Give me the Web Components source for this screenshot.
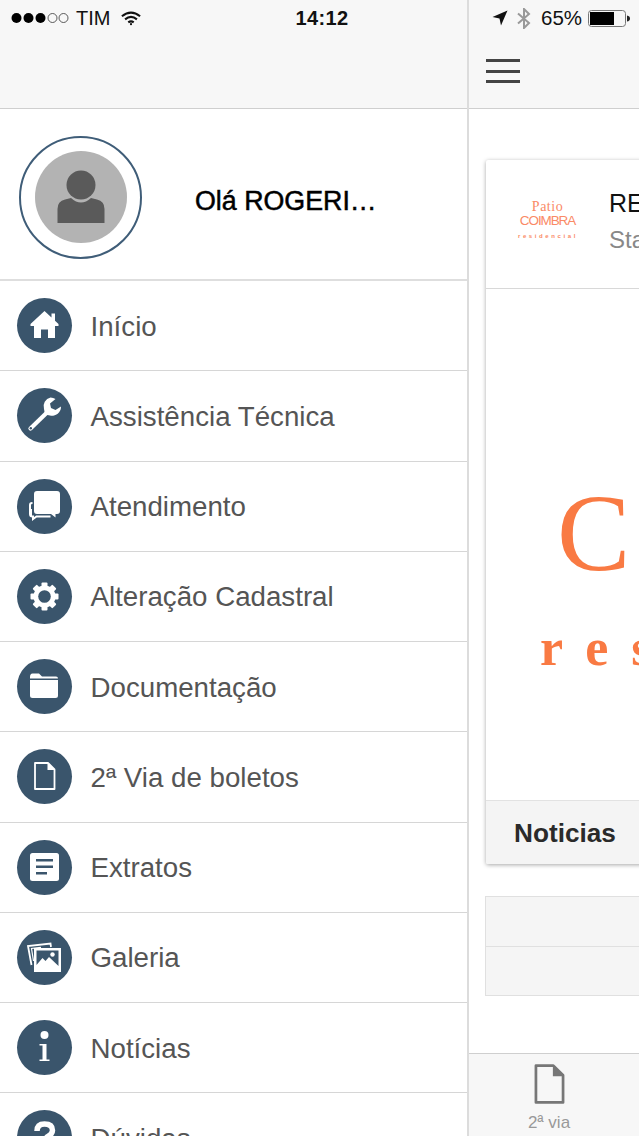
<!DOCTYPE html>
<html lang="pt">
<head>
<meta charset="utf-8">
<title>Menu</title>
<style>
    html, body { margin: 0; padding: 0; background: #fff; }
    body { font-family: "Liberation Sans", Arial, sans-serif; }
    svg { display: block; }
</style>
</head>
<body>
<app-shell>
    <side-menu slot="menu">
        <nav-item label="Início">
            <svg slot="icon" viewBox="0 0 55 55" width="55" height="55"><path fill="#fff" d="M27.5 13 L34.5 19.5 V15.500 H38 V22.800 L41.500 26 V28 H38 V40 H31 V31.500 H24 V40 H17 V28 H13.500 V26 Z"/></svg>
        </nav-item>
        <nav-item label="Assistência Técnica">
            <svg slot="icon" viewBox="0 0 55 55" width="55" height="55"><path fill="none" stroke="#fff" stroke-width="4.200" stroke-linecap="round" d="M13.500 40.500 L30 24.500"/><path fill="#fff" d="M33.500 9.500 A9 9 0 0 0 27 21 L28 26.500 L33 27.500 A9 9 0 0 0 44 18.500 L38.500 22 L34 20 L33 15.500 L38.500 11 A9 9 0 0 0 33.500 9.500 Z"/><circle cx="13.800" cy="40.300" r="1.200" fill="#3a556c"/></svg>
        </nav-item>
        <nav-item label="Atendimento">
            <svg slot="icon" viewBox="0 0 55 55" width="55" height="55"><path fill="#fff" d="M20 12 H40 Q43 12 43 15 V32 Q43 35 40 35 H38.500 V38.500 L34 35 H20 Q17 35 17 32 V15 Q17 12 20 12 Z"/><path fill="none" stroke="#fff" stroke-width="2" d="M15.500 24 H15 Q13 24 13 26 V35 Q13 37.500 15.500 37.500 H16 V40 L19.500 37.500 H33.500"/><path fill="#fff" d="M13 30 H15 V37 H13 Z"/></svg>
        </nav-item>
        <nav-item label="Alteração Cadastral">
            <svg slot="icon" viewBox="0 0 55 55" width="55" height="55"><g fill="#fff"><circle cx="27.500" cy="27.500" r="11"/><rect x="24.500" y="13.500" width="6" height="28" rx="1"/><rect x="24.500" y="13.500" width="6" height="28" rx="1" transform="rotate(45 27.500 27.500)"/><rect x="24.500" y="13.500" width="6" height="28" rx="1" transform="rotate(90 27.500 27.500)"/><rect x="24.500" y="13.500" width="6" height="28" rx="1" transform="rotate(135 27.500 27.500)"/></g><circle cx="27.500" cy="27.500" r="6.300" fill="#3a556c"/></svg>
        </nav-item>
        <nav-item label="Documentação">
            <svg slot="icon" viewBox="0 0 55 55" width="55" height="55"><path fill="#fff" d="M13 18 Q13 14.500 15.500 14.500 H22 L25 17.500 H39 Q41 17.500 41 19.500 H13 Z M13 21 H41 V36.500 Q41 39 38.500 39 H15.500 Q13 39 13 36.500 Z"/></svg>
        </nav-item>
        <nav-item label="2ª Via de boletos">
            <svg slot="icon" viewBox="0 0 55 55" width="55" height="55"><path fill="none" stroke="#fff" stroke-width="1.800" stroke-linejoin="round" d="M18 14 H31 L37.500 20.500 V40 H18 Z"/><path fill="#fff" d="M30.500 13.500 L38 21 H30.500 Z"/></svg>
        </nav-item>
        <nav-item label="Extratos">
            <svg slot="icon" viewBox="0 0 55 55" width="55" height="55"><rect x="13" y="13" width="29" height="28" rx="2.500" fill="#fff"/><g fill="#3a556c"><rect x="19" y="19" width="17" height="2.500"/><rect x="19" y="25.500" width="17" height="2.500"/><rect x="19" y="32" width="11" height="2.500"/></g></svg>
        </nav-item>
        <nav-item label="Galeria">
            <svg slot="icon" viewBox="0 0 55 55" width="55" height="55"><path fill="none" stroke="#fff" stroke-width="1.800" d="M14.500 35 L11 16 L33.500 13.500 L34 17"/><path fill="none" stroke="#fff" stroke-width="1.200" d="M16.500 31 L14.500 18.500 L24 17.300"/><path fill="#fff" fill-rule="evenodd" d="M17 18 H44 V42 H17 Z M19.500 20.500 V35 L25.500 28 L28.500 31 L32 27 L41.500 36 V20.500 Z"/><circle cx="35.500" cy="24.500" r="2.200" fill="#fff"/></svg>
        </nav-item>
        <nav-item label="Notícias">
            <svg slot="icon" viewBox="0 0 55 55" width="55" height="55"><g fill="#fff"><circle cx="27.500" cy="15" r="4"/><rect x="25.500" y="24" width="4" height="16.500"/><rect x="22.500" y="24" width="5" height="1.500"/><rect x="22.500" y="39.500" width="10" height="1.500"/></g></svg>
        </nav-item>
        <nav-item label="Dúvidas">
            <svg slot="icon" viewBox="0 0 55 55" width="55" height="55"><path fill="none" stroke="#fff" stroke-width="5.500" d="M20 21 Q20 14 27.500 14 Q35.500 14 35.500 20.500 Q35.500 24 31 26.500 Q27.500 28.500 27.500 34"/><circle cx="27.500" cy="41" r="3.200" fill="#fff"/></svg>
        </nav-item>
    </side-menu>
    <main-panel slot="main"></main-panel>
</app-shell>

<script>
class AppShell extends HTMLElement {
    constructor() {
        super();
        this.attachShadow({ mode: 'open' });
        this.shadowRoot.innerHTML = `
            <style>
                :host {
                    display: flex;
                    width: 639px;
                    height: 1136px;
                    overflow: hidden;
                }
            </style>
            <slot name="menu"></slot>
            <slot name="main"></slot>
        `;
    }
}
customElements.define('app-shell', AppShell);

class NavBar extends HTMLElement {
    constructor() {
        super();
        this.attachShadow({ mode: 'open' });
        this.shadowRoot.innerHTML = `
            <style>
                :host {
                    display: block;
                    box-sizing: border-box;
                    height: 109px;
                    background: #f7f7f7;
                    border-bottom: 1px solid #cfcfcf;
                    flex: none;
                }
            </style>
            <slot></slot>
        `;
    }
}
customElements.define('nav-bar', NavBar);

// Left half of the status bar: carrier, wifi and clock
class StatusLeft extends HTMLElement {
    constructor() {
        super();
        this.attachShadow({ mode: 'open' });
        this.shadowRoot.innerHTML = `
            <style>
                :host {
                    display: flex;
                    align-items: center;
                    height: 36px;
                    padding-left: 11px;
                    color: #111;
                    font: 20px "Liberation Sans", Arial, sans-serif;
                }
                .carrier { margin-left: 7px; }
                .wifi { margin-left: 11px; }
                .time {
                    margin-left: 154px;
                    font-weight: bold;
                    font-size: 20px;
                    letter-spacing: 0.4px;
                }
                svg { display: block; }
            </style>
            <svg width="58" height="12" viewBox="0 0 58 12">
                <circle cx="5.500" cy="6" r="5"/><circle cx="17.500" cy="6" r="5"/><circle cx="29.500" cy="6" r="5"/>
                <circle cx="41.500" cy="6" r="4.500" fill="none" stroke="#333" stroke-width="0.800"/>
                <circle cx="52.500" cy="6" r="4.500" fill="none" stroke="#333" stroke-width="0.800"/>
            </svg>
            <span class="carrier">TIM</span>
            <svg class="wifi" width="20" height="15" viewBox="0 0 22 16" fill="none" stroke="#111" stroke-width="2.300">
                <path d="M1 5.500 Q11 -2.500 21 5.500"/>
                <path d="M4.500 9 Q11 3.500 17.500 9"/>
                <path d="M8 12.300 Q11 10 14 12.300"/>
                <circle cx="11" cy="14.200" r="1.200" fill="#111" stroke="none"/>
            </svg>
            <span class="time">14:12</span>
        `;
    }
}
customElements.define('status-left', StatusLeft);

// Right half of the status bar: location, bluetooth and battery
class StatusRight extends HTMLElement {
    constructor() {
        super();
        this.attachShadow({ mode: 'open' });
        this.shadowRoot.innerHTML = `
            <style>
                :host {
                    display: flex;
                    align-items: center;
                    height: 36px;
                    padding-left: 23px;
                    color: #111;
                    font: 20.500px "Liberation Sans", Arial, sans-serif;
                }
                .bt { margin-left: 9px; }
                .pct { margin-left: 10px; }
                .batt { margin-left: 6px; }
                svg { display: block; }
            </style>
            <svg width="16" height="16" viewBox="0 0 16 16"><path fill="#111" d="M15.500 0.500 L9 15.500 L7.500 8.500 L0.500 7 Z"/></svg>
            <svg class="bt" width="14" height="21" viewBox="0 0 14 21" fill="none" stroke="#999" stroke-width="2"><path d="M1 5.500 L12 15 L7 20 V1 L12 6 L1 15.500"/></svg>
            <span class="pct">65%</span>
            <svg class="batt" width="43" height="17" viewBox="0 0 43 17">
                <rect x="0.500" y="0.500" width="37" height="16" rx="3" fill="none" stroke="#777"/>
                <rect x="2" y="2" width="24" height="13" fill="#000"/>
                <path d="M39 5.500 Q42 6 42 8.500 Q42 11 39 11.500 Z" fill="#222"/>
            </svg>
        `;
    }
}
customElements.define('status-right', StatusRight);

class UserCard extends HTMLElement {
    constructor() {
        super();
        this.attachShadow({ mode: 'open' });
        this.shadowRoot.innerHTML = `
            <style>
                :host {
                    display: flex;
                    align-items: center;
                    box-sizing: border-box;
                    height: 172px;
                    padding: 6px 0 0 19px;
                    border-bottom: 2px solid #dedede;
                    flex: none;
                }
                .ring {
                    box-sizing: border-box;
                    width: 123px;
                    height: 123px;
                    border: 2px solid #3f5d78;
                    border-radius: 50%;
                    display: flex;
                    align-items: center;
                    justify-content: center;
                    flex: none;
                }
                .name {
                    margin: 8px 0 0 53px;
                    color: #000;
                    font: 26.800px "Liberation Sans", Arial, sans-serif;
                    -webkit-text-stroke: 0.5px #000;
                    white-space: nowrap;
                }
                svg { display: block; }
            </style>
            <div class="ring">
                <svg width="92" height="92" viewBox="0 0 92 92">
                    <circle cx="46" cy="46" r="46" fill="#b3b3b3"/>
                    <circle cx="46" cy="34" r="14.500" fill="#5a5a5a"/>
                    <path fill="#5a5a5a" d="M22.500 72 V58 Q22.500 50 30 48.500 L36 47 Q46 56 56 47 L62 48.500 Q69.500 50 69.500 58 V72 Z"/>
                </svg>
            </div>
            <span class="name">Olá ROGERI…</span>
        `;
    }
}
customElements.define('user-card', UserCard);

class NavItem extends HTMLElement {
    constructor() {
        super();
        this.attachShadow({ mode: 'open' });
        this.shadowRoot.innerHTML = `
            <style>
                :host {
                    display: flex;
                    align-items: center;
                    gap: 18.500px;
                    box-sizing: border-box;
                    height: 90.25px;
                    padding-left: 17px;
                    border-bottom: 1px solid #d6d6d6;
                    color: #555;
                    font: 27.700px "Liberation Sans", Arial, sans-serif;
                    flex: none;
                }
                .badge {
                    width: 55px;
                    height: 55px;
                    border-radius: 50%;
                    background: #3a556c;
                    flex: none;
                }
                .label { white-space: nowrap; padding-top: 2px; }
            </style>
            <div class="badge"><slot name="icon"></slot></div>
            <span class="label"></span>
        `;
        this.shadowRoot.querySelector('.label').textContent = this.getAttribute('label');
    }
}
customElements.define('nav-item', NavItem);

class SideMenu extends HTMLElement {
    constructor() {
        super();
        this.attachShadow({ mode: 'open' });
        this.shadowRoot.innerHTML = `
            <style>
                :host {
                    display: flex;
                    flex-direction: column;
                    flex: none;
                    width: 467px;
                    height: 1136px;
                    overflow: hidden;
                    background: #fff;
                }
            </style>
            <nav-bar><status-left></status-left></nav-bar>
            <user-card></user-card>
            <slot></slot>
        `;
    }
}
customElements.define('side-menu', SideMenu);

class NewsCard extends HTMLElement {
    constructor() {
        super();
        this.attachShadow({ mode: 'open' });
        this.shadowRoot.innerHTML = `
            <style>
                :host {
                    display: block;
                    box-sizing: border-box;
                    width: 300px;
                    height: 704px;
                    margin: 51px 0 0 17px;
                    background: #fff;
                    border-radius: 2px;
                    box-shadow: 0 1px 4px rgba(0, 0, 0, 0.35);
                    overflow: hidden;
                }
                .top {
                    display: flex;
                    align-items: center;
                    box-sizing: border-box;
                    height: 129px;
                    border-bottom: 1px solid #d8d8d8;
                    padding-left: 32px;
                }
                .logo {
                    width: 59px;
                    flex: none;
                    margin-top: -9px;
                    color: #fa8a66;
                    text-align: center;
                    font-family: "Liberation Sans", Arial, sans-serif;
                    line-height: 1;
                    white-space: nowrap;
                }
                .logo .a { font-size: 14px; line-height: 14px; letter-spacing: 0.5px; font-family: "Liberation Serif", serif; }
                .logo .b { font-size: 13.500px; line-height: 13px; letter-spacing: -1.100px; }
                .logo .c { font-size: 6px; font-weight: bold; letter-spacing: 2.600px; margin-top: 6px; }
                .titles { margin: -5px 0 0 32px; white-space: nowrap; }
                .title { color: #111; font-size: 25px; line-height: 30px; }
                .sub { color: #888; font-size: 24px; line-height: 30px; margin-top: 7px; }
                .cover {
                    box-sizing: border-box;
                    height: 511px;
                    padding: 188px 0 0 71px;
                    color: #f97a43;
                    white-space: nowrap;
                }
                .big { font: 110px/112px "Liberation Serif", serif; letter-spacing: 8px; }
                .small {
                    margin: 34px 0 0 -17px;
                    font: bold 52px/50px "Liberation Serif", serif;
                    letter-spacing: 23px;
                }
                .bottom {
                    box-sizing: border-box;
                    height: 64px;
                    padding-left: 28px;
                    background: #f4f4f4;
                    border-top: 1px solid #e2e2e2;
                    color: #2a2a2a;
                    font: bold 26.200px/64px "Liberation Sans", Arial, sans-serif;
                }
            </style>
            <div class="top">
                <div class="logo">
                    <div class="a">Patio</div>
                    <div class="b">COIMBRA</div>
                    <div class="c">residencial</div>
                </div>
                <div class="titles">
                    <div class="title">RE</div>
                    <div class="sub">Sta</div>
                </div>
            </div>
            <div class="cover">
                <div class="big">CO</div>
                <div class="small">res</div>
            </div>
            <div class="bottom">Noticias</div>
        `;
    }
}
customElements.define('news-card', NewsCard);

class EmptyList extends HTMLElement {
    constructor() {
        super();
        this.attachShadow({ mode: 'open' });
        this.shadowRoot.innerHTML = `
            <style>
                :host {
                    display: block;
                    box-sizing: border-box;
                    width: 300px;
                    margin: 32px 0 0 16px;
                    background: #f5f5f5;
                    border: 1px solid #e0e0e0;
                }
                div { box-sizing: border-box; height: 49px; }
                div + div { border-top: 1px solid #e0e0e0; }
            </style>
            <div></div>
            <div></div>
        `;
    }
}
customElements.define('empty-list', EmptyList);

class TabBar extends HTMLElement {
    constructor() {
        super();
        this.attachShadow({ mode: 'open' });
        this.shadowRoot.innerHTML = `
            <style>
                :host {
                    display: block;
                    box-sizing: border-box;
                    height: 83px;
                    padding: 9px 0 0 80px;
                    background: #f7f7f7;
                    border-top: 1px solid #cfcfcf;
                    color: #999;
                    font: 17px/20px "Liberation Sans", Arial, sans-serif;
                    flex: none;
                }
                .tab { width: 60px; margin-left: -30px; text-align: center; }
                svg { display: block; margin: 0 auto 8px; }
            </style>
            <div class="tab">
                <svg width="31" height="42" viewBox="0 0 32 42">
                    <path fill="none" stroke="#777" stroke-width="2.800" stroke-linejoin="round" d="M2 2 H20 L30 12 V40 H2 Z"/>
                    <path fill="#777" d="M19.500 2 L30.500 13 H19.500 Z"/>
                </svg>
                <span>2ª via</span>
            </div>
        `;
    }
}
customElements.define('tab-bar', TabBar);

class MainPanel extends HTMLElement {
    constructor() {
        super();
        this.attachShadow({ mode: 'open' });
        this.shadowRoot.innerHTML = `
            <style>
                :host {
                    display: flex;
                    flex-direction: column;
                    flex: none;
                    box-sizing: border-box;
                    width: 172px;
                    height: 1136px;
                    overflow: hidden;
                    background: #fff;
                    border-left: 2px solid #dcdcdc;
                }
                .content { flex: 1; min-height: 0; overflow: hidden; }
                .burger {
                    display: flex;
                    flex-direction: column;
                    gap: 7.500px;
                    width: 34px;
                    margin: 23px 0 0 17px;
                }
                .burger span { height: 3px; background: #444; }
            </style>
            <nav-bar>
                <status-right></status-right>
                <div class="burger"><span></span><span></span><span></span></div>
            </nav-bar>
            <div class="content">
                <news-card></news-card>
                <empty-list></empty-list>
            </div>
            <tab-bar></tab-bar>
        `;
    }
}
customElements.define('main-panel', MainPanel);
</script>
</body>
</html>
